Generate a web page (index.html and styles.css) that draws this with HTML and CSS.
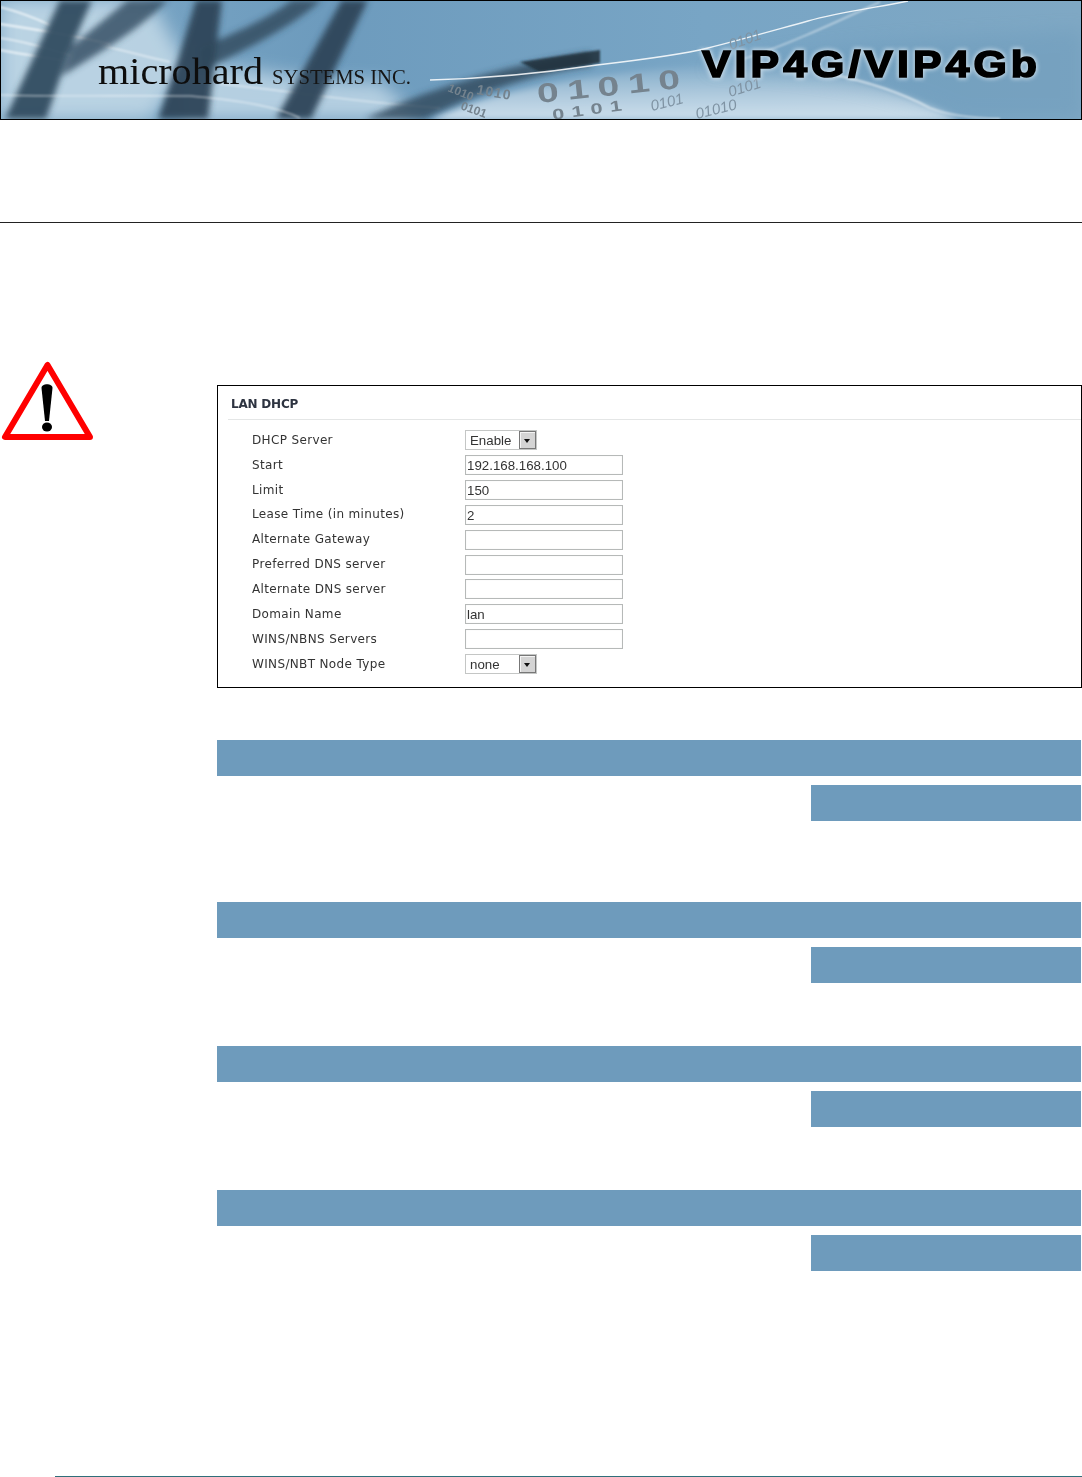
FILE: index.html
```html
<!DOCTYPE html>
<html lang="en">
<head>
<meta charset="utf-8">
<title>VIP4G/VIP4Gb LAN DHCP</title>
<link rel="stylesheet" href="styles.css">
</head>
<body>
<header class="banner">
<svg class="banner-art" viewBox="0 0 1082 120" width="1082" height="120">
  <defs>
    <linearGradient id="sky" x1="0" y1="0" x2="1" y2="0">
      <stop offset="0" stop-color="#7ea9c7"/>
      <stop offset=".3" stop-color="#6d9bbd"/>
      <stop offset=".65" stop-color="#78a5c5"/>
      <stop offset="1" stop-color="#7fa8c4"/>
    </linearGradient>
    <linearGradient id="haze" x1="0" y1="0" x2="0" y2="1">
      <stop offset="0" stop-color="#fff" stop-opacity="0"/>
      <stop offset="1" stop-color="#dbe9f3" stop-opacity=".85"/>
    </linearGradient>
    <filter id="b05" x="-10%" y="-30%" width="120%" height="160%"><feGaussianBlur stdDeviation=".5"/></filter>
    <filter id="b1" x="-20%" y="-20%" width="140%" height="140%"><feGaussianBlur stdDeviation="1"/></filter>
    <filter id="b3" x="-20%" y="-20%" width="140%" height="140%"><feGaussianBlur stdDeviation="3.4"/></filter>
    <filter id="b8" x="-30%" y="-50%" width="160%" height="200%"><feGaussianBlur stdDeviation="9"/></filter>
    <filter id="glow" x="-5%" y="-30%" width="110%" height="160%"><feGaussianBlur stdDeviation="2.2"/></filter>
  </defs>
  <rect width="1082" height="120" fill="url(#sky)"/>
  <path d="M0 0H150L190 70L150 120H0Z" fill="#d2e4ef" opacity=".72" filter="url(#b8)"/>
  <path d="M190 62C260 70 330 85 380 82L420 120H180Z" fill="#c6dcea" opacity=".8" filter="url(#b8)"/>
  <path d="M430 120C500 85 640 66 760 62C840 70 900 92 960 120Z" fill="url(#haze)" filter="url(#b3)"/>
  <path d="M700 70C800 45 900 40 1082 30V120H960C900 90 800 70 700 70Z" fill="#5f90b4" opacity=".25" filter="url(#b8)"/>
  <g fill="none" stroke="#fff" filter="url(#b1)">
    <path d="M0 7C20 12 35 18 50 25" stroke-width="1.5" opacity=".85"/>
    <path d="M0 24C40 30 70 35 110 44" stroke-width="2" opacity=".8"/>
    <path d="M0 38C30 42 50 50 70 55" stroke-width="1.5" opacity=".7"/>
    <path d="M0 50C20 54 35 56 60 60" stroke-width="2" opacity=".7"/>
    <path d="M100 45C130 52 150 58 170 62" stroke-width="1.5" opacity=".6"/>
    <path d="M220 84C300 92 350 102 440 108" stroke-width="1.3" opacity=".55"/>
    <path d="M740 60C780 48 830 25 880 2" stroke-width="1.5" opacity=".55"/>
    <path d="M830 74C870 82 900 92 930 108C945 114 970 118 1000 119" stroke-width="1.3" opacity=".8"/>
  </g>
  <g fill="#2e475b" filter="url(#b3)">
    <path d="M60 0H92L68 55L46 119H5Z" opacity=".92"/>
    <path d="M128 0H168C140 30 95 55 62 76L72 46Z" opacity=".78"/>
    <path d="M196 0H222L208 119H158L178 60Z" opacity=".96"/>
    <path d="M292 0H322C285 32 240 52 200 72L200 48C230 35 270 18 292 0Z" opacity=".8"/>
    <path d="M342 0H368L311 119H276Z" opacity=".96"/>
    <path d="M365 119C420 92 500 66 590 52L592 66C530 74 470 96 425 119Z" opacity=".8"/>
  </g>
  <path d="M520 62L600 50L600 63L540 72Z" fill="#22313d" filter="url(#b1)" opacity=".88"/>
  <g fill="none" stroke="#fff">
    <path d="M0 95C70 97 130 95 190 96C240 100 280 108 300 118" stroke-width="1.4" opacity=".5" filter="url(#b1)"/>
    <path d="M430 80C470 79 530 75 597 65C640 60 680 55 708 48C740 40 775 30 808 21C840 12 880 7 908 1" stroke-width="1.3" opacity=".85" filter="url(#b05)"/>
  </g>
  <g class="bits" filter="url(#b05)">
    <text class="bit-s" transform="translate(447 91) rotate(22)">1010</text>
    <text class="bit-m" transform="translate(476 94) rotate(10)">1010</text>
    <text class="bit-l" transform="translate(538 103) rotate(-6) scale(1.45 1)">01010</text>
    <text class="bit-s" transform="translate(460 109) rotate(20)">0101</text>
    <text class="bit-r" transform="translate(553 120) rotate(-8) scale(1.45 1)">0101</text>
  </g>
  <g class="bits-i">
    <text class="bit-n" transform="translate(652 111) rotate(-14)">0101</text>
    <text class="bit-n" transform="translate(697 119) rotate(-14)">01010</text>
    <text class="bit-n" transform="translate(730 97) rotate(-17)">0101</text>
    <text class="bit-n" transform="translate(731 50) rotate(-20)">0101</text>
  </g>
  <text class="brand" x="98" y="84" textLength="165" lengthAdjust="spacingAndGlyphs">microhard</text>
  <text class="brand-sub" x="272" y="84" textLength="139" lengthAdjust="spacingAndGlyphs">SYSTEMS INC.</text>
  <text class="product product-glow" x="702" y="77" textLength="339" lengthAdjust="spacingAndGlyphs" filter="url(#glow)">VIP4G/VIP4Gb</text>
  <text class="product" x="702" y="77" textLength="339" lengthAdjust="spacingAndGlyphs">VIP4G/VIP4Gb</text>
</svg>
</header>

<div class="rule"></div>

<main class="content">
  <div class="aside">
    <svg class="warning" viewBox="0 0 96 84" width="96" height="84">
      <path d="M47.5 5L5 77H90Z" fill="#fff" stroke="#ff0000" stroke-width="6" stroke-linejoin="round"/>
      <path d="M41.5 28C41.5 23 52.5 23 52.5 28L49 61H45Z" fill="#000"/>
      <ellipse cx="47" cy="67" rx="5" ry="4.6" fill="#000"/>
    </svg>
  </div>
  <div class="main-col">
    <section class="panel">
      <h2 class="panel-title">LAN DHCP</h2>
      <div class="panel-rule"></div>
      <form class="fields">
        <label class="field-label">DHCP Server</label>
        <div class="select"><span>Enable</span><i class="select-btn"></i></div>
        <label class="field-label">Start</label>
        <input class="input" type="text" value="192.168.168.100">
        <label class="field-label">Limit</label>
        <input class="input" type="text" value="150">
        <label class="field-label">Lease Time (in minutes)</label>
        <input class="input" type="text" value="2">
        <label class="field-label">Alternate Gateway</label>
        <input class="input" type="text" value="">
        <label class="field-label">Preferred DNS server</label>
        <input class="input" type="text" value="">
        <label class="field-label">Alternate DNS server</label>
        <input class="input" type="text" value="">
        <label class="field-label">Domain Name</label>
        <input class="input" type="text" value="lan">
        <label class="field-label">WINS/NBNS Servers</label>
        <input class="input" type="text" value="">
        <label class="field-label">WINS/NBT Node Type</label>
        <div class="select"><span>none</span><i class="select-btn"></i></div>
      </form>
    </section>

    <div class="block block-first"><div class="bar"></div><div class="bar bar-sub"></div></div>
    <div class="block block-second"><div class="bar"></div><div class="bar bar-sub"></div></div>
    <div class="block block-third"><div class="bar"></div><div class="bar bar-sub"></div></div>
    <div class="block block-third"><div class="bar"></div><div class="bar bar-sub"></div></div>
  </div>
</main>

<footer class="footer-rule"></footer>
</body>
</html>
```
FILE: styles.css
```css
* { box-sizing: border-box; }
html, body { margin: 0; padding: 0; background: #fff; }
body {
  width: 1082px;
  height: 1477px;
  overflow: hidden;
  display: flex;
  flex-direction: column;
  font-family: "Liberation Sans", Arial, sans-serif;
}

.banner {
  height: 120px;
  border: 1px solid #000;
  overflow: hidden;
  flex: none;
}
.banner-art { display: block; margin: -1px; }

.bits text {
  font-family: "Liberation Sans", sans-serif;
  font-weight: 700;
  fill: #74838e;
}
.bit-s { font-size: 12px; }
.bit-m { font-size: 14px; letter-spacing: 1px; }
.bit-l { font-size: 27px; letter-spacing: 6px; }
.bit-r { font-size: 15px; letter-spacing: 5px; }
.bits-i text {
  font-family: "Liberation Sans", sans-serif;
  font-style: italic;
  fill: #7f93a3;
}
.bit-n { font-size: 15px; }

.brand {
  font-family: "Liberation Serif", serif;
  font-size: 37px;
  fill: #0d0d0d;
}
.brand-sub {
  font-family: "Liberation Serif", serif;
  font-size: 20px;
  fill: #151515;
}
.product {
  font-family: "Liberation Sans", sans-serif;
  font-weight: 700;
  font-size: 37px;
  letter-spacing: 3.5px;
  fill: #000;
  stroke: #000;
  stroke-width: 1.6px;
}
.product-glow { fill: #e8f2f8; stroke: #e8f2f8; stroke-width: 3.4px; opacity: .75; }

.rule {
  flex: none;
  height: 1px;
  margin-top: 102px;
  background: #222;
}

.content {
  flex: 1;
  display: grid;
  grid-template-columns: 217px 1fr;
}

.aside { padding-top: 137px; }
.warning { display: block; }

.main-col { padding-top: 162px; }

.panel {
  height: 303px;
  border: 1px solid #000;
  filter: blur(.35px);
}
.panel-title {
  margin: 0;
  padding: 10px 0 0 13px;
  height: 33px;
  font-family: "DejaVu Sans", Verdana, sans-serif;
  font-size: 12px;
  line-height: 16px;
  font-weight: 700;
  letter-spacing: -.2px;
  color: #2d3340;
}
.panel-rule { height: 1px; background: #e4e6e6; margin-left: 10px; }

.fields {
  display: grid;
  grid-template-columns: 213px 158px;
  grid-auto-rows: 24.85px;
  align-items: center;
  padding: 8px 0 0 34px;
}
.field-label {
  font-family: "DejaVu Sans", Verdana, sans-serif;
  font-size: 12px;
  letter-spacing: .35px;
  color: #333;
  margin-top: -1px;
}
.input {
  width: 158px;
  height: 20px;
  padding: 1px 1px 0;
  border: 1px solid #b6b9b8;
  box-shadow: inset 0 0 1px #ddd;
  outline: 0;
  background: #fff;
  font-family: "Liberation Sans", Arial, sans-serif;
  font-size: 13.3px;
  color: #333;
}
.select {
  width: 72px;
  height: 20px;
  padding-left: 4px;
  border: 1px solid #c4c6c5;
  display: flex;
  align-items: center;
  justify-content: space-between;
  font-family: "Liberation Sans", Arial, sans-serif;
  font-size: 13.3px;
  color: #333;
}
.select-btn {
  position: relative;
  width: 17px;
  height: 18px;
  border: 1px solid #777;
  background: #d4d4d4;
  box-shadow: inset 1px 1px 0 #f4f4f4;
}
.select-btn::after {
  content: "";
  position: absolute;
  left: 4px;
  top: 7px;
  border: 3px solid transparent;
  border-top: 4px solid #111;
  border-bottom-width: 0;
}

.block { display: flex; flex-direction: column; align-items: flex-end; gap: 9px; padding-right: 1px; }
.block-first { margin-top: 52px; }
.block-second { margin-top: 81px; }
.block-third { margin-top: 63px; }
.bar { width: 100%; height: 36px; background: #6e9bbc; }
.bar-sub { width: 270px; }

.footer-rule {
  flex: none;
  height: 1px;
  margin: 0 0 0 55px;
  background: #2f6f7a;
}
```
